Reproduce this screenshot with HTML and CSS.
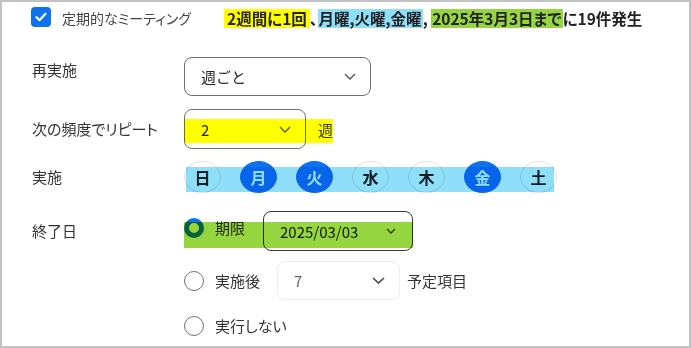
FILE: index.html
```html
<!DOCTYPE html>
<html lang="ja">
<head>
  <meta charset="UTF-8" />
  <title>定期的なミーティング</title>
  <link rel="stylesheet" href="styles.css">
</head>
<body>

  <div class="panel">

    <!-- 見出し行 -->
    <div class="header">
      <span class="checkbox">
        <svg width="12" height="10" viewBox="0 0 12 10"><path d="M1.5 5.2l3 3 6-6.4" fill="none" stroke="#fff" stroke-width="2.2" stroke-linecap="round" stroke-linejoin="round"/></svg>
      </span>
      <span class="meeting-label">定期的なミーティング</span>
      <span class="summary"><span class="mark mark-yellow">2週間に1回</span>、<span class="mark mark-blue">月曜,火曜,金曜</span>, <span class="mark mark-green">2025年3月3日まで</span>に19件発生</span>
    </div>

    <!-- 再実施 -->
    <div class="row row-repeat">
      <div class="row-label">再実施</div>
      <div class="select select-wide">
        <span>週ごと</span>
        <svg width="12" height="7" viewBox="0 0 12 7"><path d="M1 1l5 5 5-5" fill="none" stroke="#555" stroke-width="1.4"/></svg>
      </div>
    </div>

    <!-- 頻度 -->
    <div class="row row-interval">
      <div class="row-label">次の頻度でリピート</div>
      <div class="hl hl-yellow">
        <div class="select select-small">
          <span>2</span>
          <svg width="12" height="7" viewBox="0 0 12 7"><path d="M1 1l5 5 5-5" fill="none" stroke="#555" stroke-width="1.4"/></svg>
        </div>
        <span class="unit">週</span>
      </div>
    </div>

    <!-- 曜日 -->
    <div class="row row-days">
      <div class="row-label">実施</div>
      <div class="hl hl-blue days">
        <span class="day">日</span>
        <span class="day on">月</span>
        <span class="day on">火</span>
        <span class="day">水</span>
        <span class="day">木</span>
        <span class="day on">金</span>
        <span class="day">土</span>
      </div>
    </div>

    <!-- 終了日 -->
    <div class="row row-end">
      <div class="row-label">終了日</div>
      <div class="hl hl-green end-by">
        <label class="option option-top">
          <span class="radio checked"></span>
          <span>期限</span>
        </label>
        <div class="select select-date">
          <span>2025/03/03</span>
          <svg width="10" height="6" viewBox="0 0 10 6"><path d="M1 1l4 4 4-4" fill="none" stroke="#444" stroke-width="1.3"/></svg>
        </div>
      </div>
    </div>

    <div class="row row-after">
      <div class="row-label"></div>
      <label class="option">
        <span class="radio"></span>
        <span>実施後</span>
      </label>
      <div class="select select-count">
        <span>7</span>
        <svg width="13" height="7" viewBox="0 0 13 7"><path d="M1 1l5.5 5 5.5-5" fill="none" stroke="#444" stroke-width="1.6"/></svg>
      </div>
      <span class="after-text">予定項目</span>
    </div>

    <div class="row row-never">
      <div class="row-label"></div>
      <label class="option">
        <span class="radio"></span>
        <span>実行しない</span>
      </label>
    </div>

  </div>

</body>
</html>
```

FILE: styles.css
```css
body {
  margin: 0;
  background: #fff;
  font-family: "Noto Sans CJK JP", "Noto Sans", sans-serif;
  font-feature-settings: "palt";
  color: #333;
}

.panel {
  box-sizing: border-box;
  width: 691px;
  height: 348px;
  border: 2px solid #c2c2c2;
  padding: 5px 0 0 30px;
}

/* 見出し */
.header {
  display: flex;
  align-items: flex-start;
}

.checkbox {
  width: 20px;
  height: 20px;
  border-radius: 4px;
  background: #0e72ed;
  display: flex;
  align-items: center;
  justify-content: center;
  margin-left: -1px;
}

.meeting-label {
  width: 162px;
  margin-left: 11px;
  font-size: 14px;
  line-height: 20px;
  margin-top: 1px;
  color: #444;
}

.summary {
  margin-top: 2px;
  font-size: 15.5px;
  font-weight: bold;
  line-height: 19px;
  color: #222;
  white-space: nowrap;
}

.mark {
  display: inline-block;
  padding: 0 1px;
}

.mark-yellow { background: #ffff00; padding: 0 3px; }
.mark-blue { background: #8fdffb; }
.mark-green { background: #95d640; }

/* 行 */
.row {
  display: flex;
  align-items: center;
}

.row-label {
  width: 152px;
  flex-shrink: 0;
  font-size: 15px;
  line-height: 20px;
  color: #333;
}

.row-repeat {
  align-items: flex-start;
  margin-top: 29px;
}

.row-repeat .row-label {
  margin-top: 3px;
}

.row-interval { margin-top: 13px; }
.row-days { margin-top: 12px; }
.row-end { margin-top: 18px; }
.row-after { margin-top: 10px; }
.row-never { margin-top: 16px; }

/* セレクト */
.select {
  box-sizing: border-box;
  display: flex;
  align-items: center;
  justify-content: space-between;
  border: 1px solid #707070;
  border-radius: 8px;
  padding: 0 14px 0 16px;
  font-size: 15px;
  color: #222;
  font-feature-settings: normal;
}

.select-wide {
  width: 187px;
  height: 39px;
}

.select-small {
  width: 122px;
  height: 40px;
}

.select-date {
  width: 150px;
  height: 40px;
  margin-left: 18px;
  border-color: #3a3a3a;
  padding: 0 16px 0 16px;
}

.select-count {
  width: 123px;
  height: 39px;
  margin-left: 17px;
  border-color: #ececec;
  color: #666;
  padding: 0 14px 0 16px;
}

/* マーカー（乗算で重ねる） */
.hl {
  position: relative;
  display: flex;
  align-items: center;
}

.hl::after {
  content: '';
  position: absolute;
  pointer-events: none;
  mix-blend-mode: multiply;
}

.hl-yellow::after {
  left: 0;
  right: 0;
  top: 10px;
  bottom: 6px;
  background: #ffff00;
}

.hl-blue::after {
  left: 2px;
  right: 3px;
  top: 6px;
  bottom: 1px;
  background: #8fdffb;
}

.hl-green::after {
  left: 0;
  right: 0;
  top: 11px;
  bottom: 3px;
  background: #95d640;
}

.unit {
  margin-left: 12px;
  font-size: 15px;
  color: #333;
}

/* 曜日 */
.days {
  gap: 19px;
}

.day {
  box-sizing: border-box;
  width: 37px;
  height: 32px;
  border-radius: 50%;
  border: 1px solid #e0e0e0;
  display: flex;
  align-items: center;
  justify-content: center;
  font-size: 16px;
  font-weight: bold;
  color: #222;
}

.day.on {
  background: #0e72ed;
  border-color: #0e72ed;
  color: #fff;
}

/* ラジオ */
.end-by {
  align-items: flex-start;
}

.option {
  display: flex;
  align-items: center;
  gap: 11px;
  font-size: 15px;
  line-height: 20px;
  color: #333;
}

.option-top {
  margin-top: 7px;
}

.radio {
  box-sizing: border-box;
  width: 20px;
  height: 20px;
  border-radius: 50%;
  border: 1.5px solid #6b7280;
  background: #fff;
}

.radio.checked {
  border: 5px solid #0e72ed;
}

.after-text {
  margin-left: 7px;
  font-size: 15px;
  color: #333;
}
```
